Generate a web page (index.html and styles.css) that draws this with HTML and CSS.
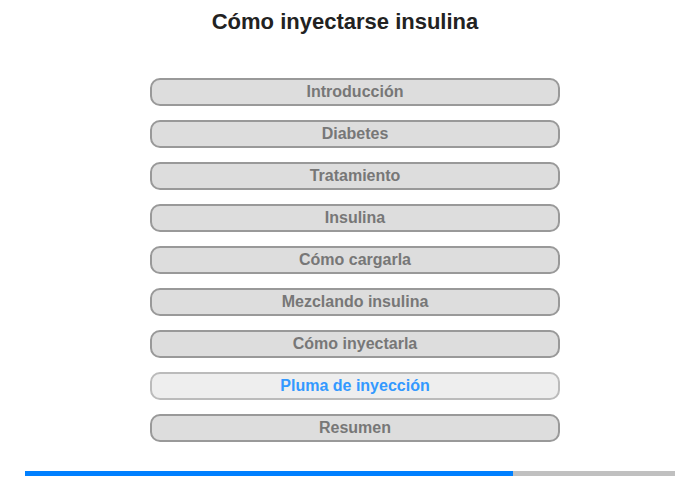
FILE: index.html
```html
<!DOCTYPE html>
<html lang="es">
<head>
    <meta charset="UTF-8">
    <title>Cómo inyectarse insulina</title>
    <link rel="stylesheet" href="styles.css">
</head>
<body>
    <h1 class="title">Cómo inyectarse insulina</h1>
    <div class="menu">
        <button class="menu-item">Introducción</button>
        <button class="menu-item">Diabetes</button>
        <button class="menu-item">Tratamiento</button>
        <button class="menu-item">Insulina</button>
        <button class="menu-item">Cómo cargarla</button>
        <button class="menu-item">Mezclando insulina</button>
        <button class="menu-item">Cómo inyectarla</button>
        <button class="menu-item active">Pluma de inyección</button>
        <button class="menu-item">Resumen</button>
    </div>
    <div class="progress">
        <div class="progress-fill" style="width: 75%"></div>
    </div>
</body>
</html>
```

FILE: styles.css
```css
body {
    font-family: 'Liberation Sans', Arial, sans-serif;
    background-color: #fff;
    margin: 0;
    padding: 0;
    color: #222;
}

.title {
    font-size: 22px;
    line-height: 24px;
    margin: 0;
    padding: 10px 10px 0 0;
    text-align: center;
    color: #222;
}

.menu {
    width: 410px;
    margin: 44px 0 0 150px;
    display: flex;
    flex-direction: column;
    gap: 14px;
}

.menu-item {
    display: block;
    width: 100%;
    height: 28px;
    padding: 0;
    background-color: #ddd;
    border: 2px solid #999;
    border-radius: 10px;
    font-family: 'Liberation Sans', Arial, sans-serif;
    font-size: 16px;
    font-weight: bold;
    color: #777;
    text-align: center;
    cursor: pointer;
}

.menu-item.active {
    background-color: #eee;
    border-color: #bbb;
    color: #3399ff;
}

.progress {
    width: 650px;
    height: 5px;
    margin: 29px 0 0 25px;
    background-color: #c0c0c0;
}

.progress-fill {
    height: 100%;
    background-color: #0080ff;
}
```
